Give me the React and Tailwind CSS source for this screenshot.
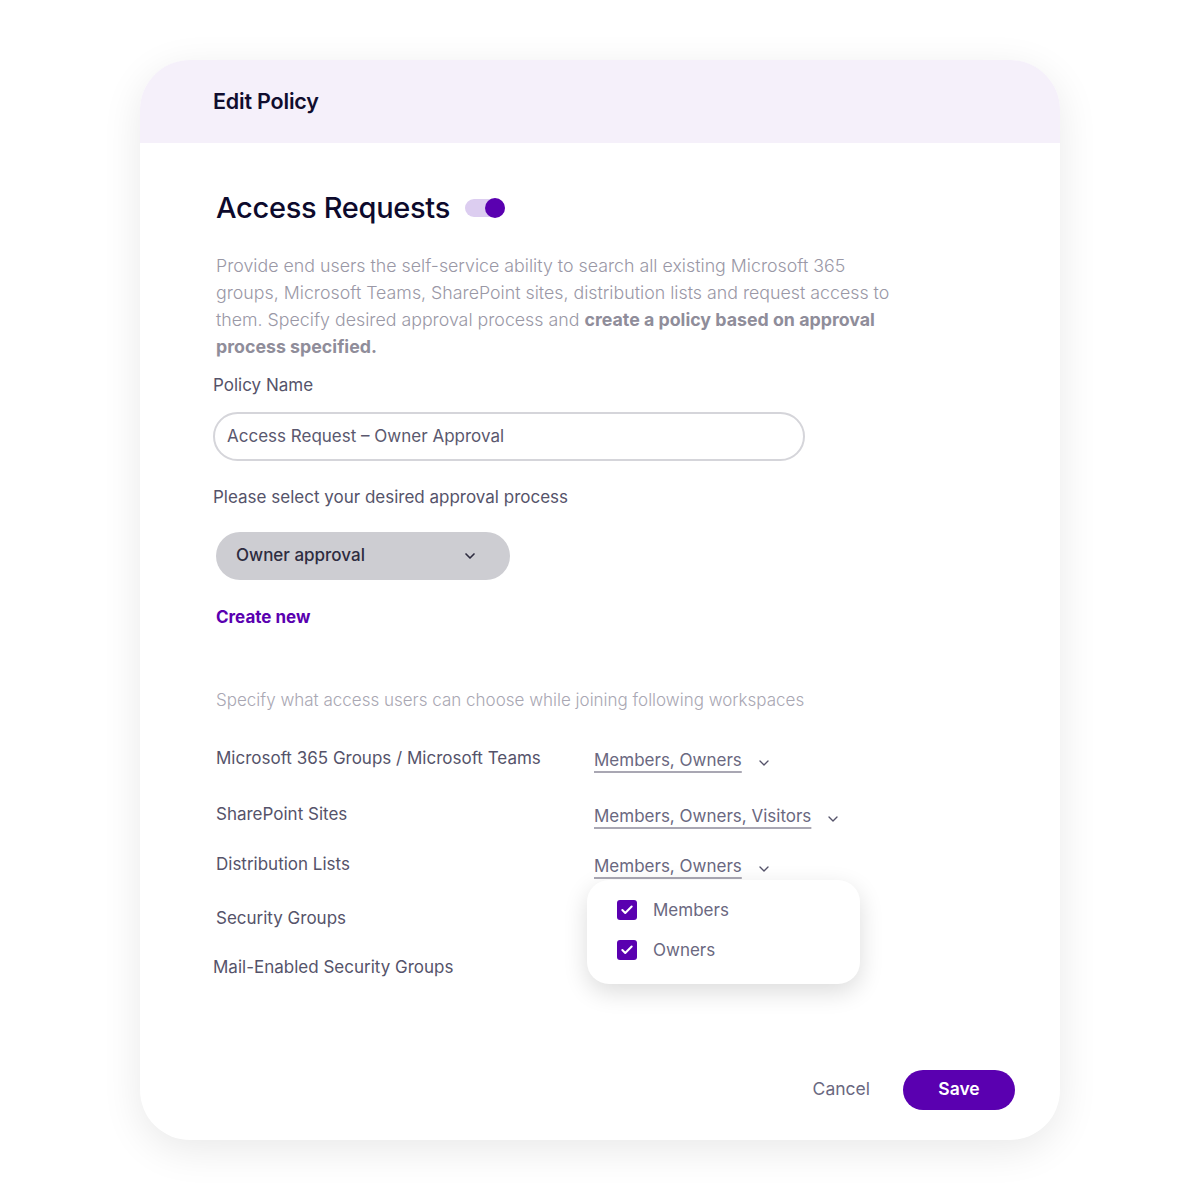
import { Check, ChevronDown } from 'lucide-react';

const rows = [
  { label: 'Microsoft 365 Groups / Microsoft Teams', value: 'Members, Owners', h: 'h-[56px]' },
  { label: 'SharePoint Sites', value: 'Members, Owners, Visitors', h: 'h-[50px]' },
  { label: 'Distribution Lists', value: 'Members, Owners', h: 'h-[54px]', open: true },
  { label: 'Security Groups', h: 'h-[49px]' },
  { label: 'Mail-Enabled Security Groups', h: 'h-[49px]', shift: true },
];

function Checkbox() {
  return (
    <span className="flex h-[20px] w-[20px] items-center justify-center rounded-[3px] bg-[#5a00b0]">
      <Check size={14} strokeWidth={3.5} className="text-white" />
    </span>
  );
}

export default function App() {
  return (
    <div className="min-h-[1200px] bg-white pt-[60px] font-['Inter',sans-serif]">
      <div className="ml-[140px] h-[1080px] w-[920px] overflow-hidden rounded-[50px] bg-white shadow-[0_10px_40px_rgba(0,0,0,0.09)]">
        <div className="flex h-[83px] items-center bg-[#f5f0fa] pl-[73px]">
          <h1 className="text-[21.5px] font-semibold tracking-[-0.2px] text-[#100d2e]">Edit Policy</h1>
        </div>

        <div className="relative px-[76px] pt-[43px]">
          <div className="flex items-center gap-[15px]">
            <h2 className="text-[29px] font-medium tracking-[-0.3px] text-[#0d0a2c]">Access Requests</h2>
            <div className="relative h-[18px] w-[40px] rounded-full bg-[#dccdf0]">
              <span className="absolute right-0 top-[-1px] h-[20px] w-[20px] rounded-full bg-[#5a00b0]" />
            </div>
          </div>

          <p className="mt-[22px] text-[17.8px] font-light leading-[27px] text-[#9a98a6]">
            Provide end users the self-service ability to search all existing Microsoft 365
            <br />
            groups, Microsoft Teams, SharePoint sites, distribution lists and request access to
            <br />
            them. Specify desired approval process and{' '}
            <span className="font-bold text-[#8f8d9a]">create a policy based on approval</span>
            <br />
            <span className="font-bold text-[#8f8d9a]">process specified.</span>
          </p>

          <div className="-ml-[3px] mt-[13px] text-[17px] text-[#55536a]">Policy Name</div>
          <div className="-ml-[3px] mt-[14px] flex h-[49px] w-[592px] items-center rounded-full border-2 border-[#d5d5da] px-[12px] text-[17px] text-[#5a586e]">
            Access Request – Owner Approval
          </div>

          <div className="-ml-[3px] mt-[24px] text-[17px] text-[#55536a]">Please select your desired approval process</div>
          <div className="mt-[21px] flex h-[48px] w-[294px] items-center justify-between rounded-full bg-[#cdcdd2] pl-[20px] pr-[32px]">
            <span className="text-[17px] font-medium text-[#2e2c40]">Owner approval</span>
            <ChevronDown size={16} strokeWidth={2.5} className="text-[#2e2c40]" />
          </div>

          <div className="mt-[25px] text-[17px] font-bold text-[#5a00b0]">Create new</div>

          <div className="mt-[58px] text-[17px] font-light text-[#a9a7b3]">
            Specify what access users can choose while joining following workspaces
          </div>

          <div className="mt-[32px]">
            {rows.map((r) => (
              <div key={r.label} className={`relative flex ${r.h}`}>
                <div className={`w-[378px] text-[17px] text-[#55536a] ${r.shift ? '-ml-[3px] mr-[3px]' : ''}`}>{r.label}</div>
                {r.value && (
                  <div className="flex items-start gap-[14px]">
                    <span className="pt-[2px] text-[17px] text-[#6a6880] underline decoration-[#a9a7b3] decoration-[1.5px] underline-offset-[5px]">
                      {r.value}
                    </span>
                    <ChevronDown size={16} strokeWidth={2} className="mt-[9px] text-[#55536a]" />
                  </div>
                )}
                {r.open && (
                  <div className="absolute left-[371px] top-[28px] z-10 flex h-[104px] w-[273px] flex-col gap-[20px] rounded-[22px] bg-white pl-[30px] pt-[20px] shadow-[0_8px_24px_rgba(0,0,0,0.14)]">
                    <label className="flex items-center gap-[16px] text-[17px] leading-[20px] text-[#6a6880]">
                      <Checkbox />
                      Members
                    </label>
                    <label className="flex items-center gap-[16px] text-[17px] leading-[20px] text-[#6a6880]">
                      <Checkbox />
                      Owners
                    </label>
                  </div>
                )}
              </div>
            ))}
          </div>

          <div className="-mr-[31px] mt-[66px] flex items-center justify-end gap-[33px]">
            <span className="text-[17.5px] text-[#6a6880]">Cancel</span>
            <button className="h-[40px] w-[112px] rounded-full bg-[#5a00b0] text-[17.5px] font-semibold text-white">
              Save
            </button>
          </div>
        </div>
      </div>
    </div>
  );
}
